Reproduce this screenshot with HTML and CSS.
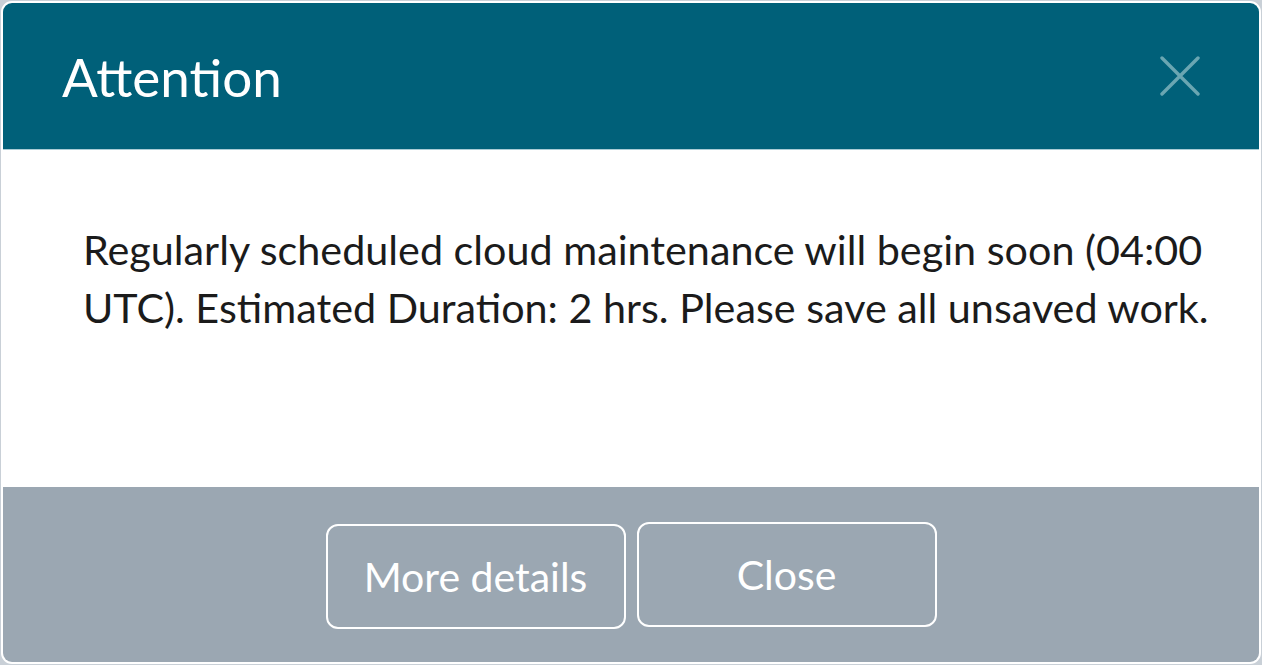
FILE: index.html
```html
<!DOCTYPE html>
<html lang="en">
<head>
<meta charset="utf-8">
<title>Attention</title>
<link rel="stylesheet" href="styles.css">
</head>
<body>
<div class="dialog" role="dialog" aria-labelledby="dlg-title">
  <header class="dialog-header">
    <h1 id="dlg-title" class="dialog-title">Attention</h1>
    <button class="icon-close" aria-label="Close">
      <svg width="40" height="40" viewBox="0 0 40 40" aria-hidden="true">
        <path d="M2 2 L38 38 M38 2 L2 38" stroke="currentColor" stroke-width="3.4" stroke-linecap="round" fill="none"/>
      </svg>
    </button>
  </header>
  <main class="dialog-body">
    <p class="message">Regularly scheduled cloud maintenance will begin soon (04:00 UTC). Estimated Duration: 2 hrs. Please save all unsaved work.</p>
  </main>
  <footer class="dialog-footer">
    <button class="btn btn-more">More details</button>
    <button class="btn btn-close">Close</button>
  </footer>
</div>
</body>
</html>
```
FILE: styles.css
```css
html, body {
  margin: 0;
  padding: 0;
  height: 100%;
}
body {
  background: #c9d0d7;
  font-family: Lato, "Open Sans", sans-serif;
  padding: 1px;
  box-sizing: border-box;
  overflow: hidden;
}
.dialog {
  height: 100%;
  box-sizing: border-box;
  border: 2px solid #ffffff;
  border-radius: 11px;
  overflow: hidden;
  display: flex;
  flex-direction: column;
  background: #ffffff;
}
.dialog-header {
  height: 146px;
  flex: none;
  background: #006079;
  border-bottom: 1px solid #a9ccd5;
  display: flex;
  align-items: center;
  justify-content: space-between;
  padding: 0 59px 0 59px;
}
.dialog-title {
  margin: 0;
  color: #ffffff;
  font-weight: 400;
  font-size: 53px;
  line-height: 1;
}
.icon-close {
  background: none;
  border: 0;
  padding: 0;
  width: 40px;
  height: 40px;
  color: #6aa6b2;
  display: flex;
  cursor: pointer;
}
.dialog-body {
  flex: 1;
  padding: 0 40px 0 80px;
  display: flex;
  align-items: flex-start;
}
.message {
  margin: 70px 0 0;
  font-size: 41.3px;
  line-height: 58px;
  color: #1b1b1b;
}
.dialog-footer {
  height: 175px;
  flex: none;
  background: #9ba7b2;
  display: flex;
  align-items: center;
  justify-content: center;
  gap: 10px;
}
.btn {
  width: 300px;
  height: 105px;
  box-sizing: border-box;
  border: 2px solid #ffffff;
  border-radius: 12px;
  background: transparent;
  color: #ffffff;
  font-family: Lato, "Open Sans", sans-serif;
  font-size: 41px;
  padding: 0;
  cursor: pointer;
}
.btn-more {
  margin-top: 3px;
}
.btn-close {
  margin-left: 1px;
}
```
